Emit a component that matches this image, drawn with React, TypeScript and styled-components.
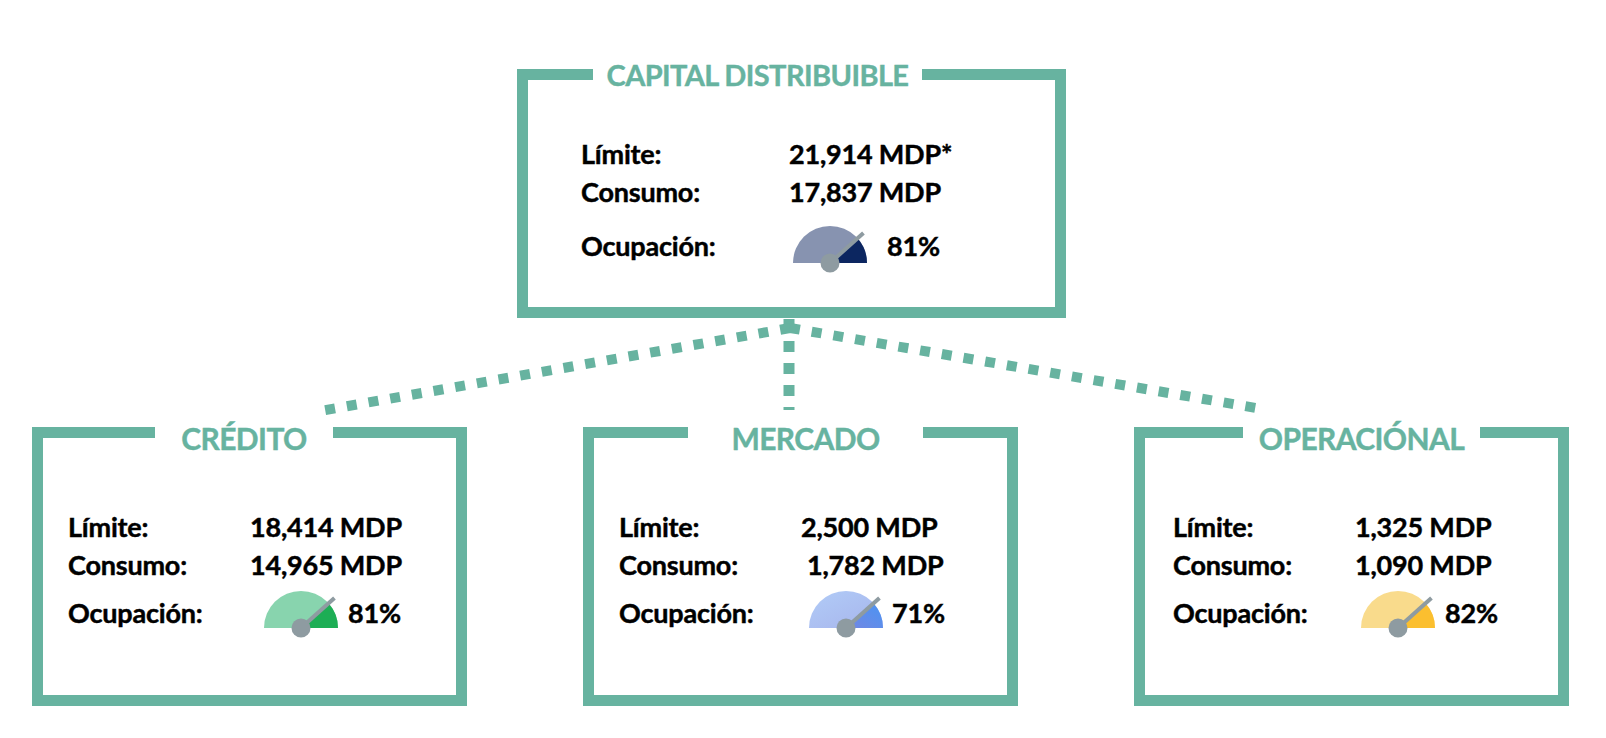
import React from "react";
import styled, { createGlobalStyle } from "styled-components";

const teal = "#67B3A0";

const GlobalStyle = createGlobalStyle`
  html, body {
    margin: 0;
    background: #ffffff;
  }
  body {
    font-family: Lato, "Open Sans", Arial, sans-serif;
    color: #000;
  }
`;

type Tone = {
  light: [string, string];
  dark: [string, string];
};

const tones: Record<string, Tone> = {
  navy: { light: ["#8793B0", "#8793B0"], dark: ["#0C2660", "#0C2660"] },
  green: { light: ["#88D4AE", "#88D4AE"], dark: ["#1DAE55", "#1DAE55"] },
  blue: { light: ["#B1CCF7", "#A7B4EC"], dark: ["#7487E2", "#4A94F3"] },
  gold: { light: ["#F9DB8C", "#F9DB8C"], dark: ["#FBBF2F", "#FBBF2F"] },
};

type BoxData = {
  id: string;
  title: string;
  limite: string;
  consumo: string;
  pct: string;
  tone: Tone;
  legendOffset: number;
  legendWidth: number;
  titleSize: number;
  titleDrop: number;
  padLeft: number;
  padTop: number;
  labelWidth: number;
  contentHeight: number;
  gaugeGap: number;
  gaugeShift: number;
  gaugeDrop: number;
  pctGap: number;
  consumoIndent?: number;
};

const top: BoxData = {
  id: "capital",
  title: "CAPITAL DISTRIBUIBLE",
  limite: "21,914 MDP*",
  consumo: "17,837 MDP",
  pct: "81%",
  tone: tones.navy,
  legendOffset: 65,
  legendWidth: 329,
  titleSize: 29,
  titleDrop: 0,
  padLeft: 53,
  padTop: 44,
  labelWidth: 208,
  contentHeight: 216,
  gaugeGap: 10,
  gaugeShift: 3,
  gaugeDrop: 8,
  pctGap: 19,
};

const children: BoxData[] = [
  {
    id: "credito",
    title: "CRÉDITO",
    limite: "18,414 MDP",
    consumo: "14,965 MDP",
    pct: "81%",
    tone: tones.green,
    legendOffset: 112,
    legendWidth: 178,
    titleSize: 30,
    titleDrop: 12,
    padLeft: 25,
    padTop: 53,
    labelWidth: 182,
    contentHeight: 240,
    gaugeGap: 4,
    gaugeShift: 13,
    gaugeDrop: 4,
    pctGap: 9,
  },
  {
    id: "mercado",
    title: "MERCADO",
    limite: "2,500 MDP",
    consumo: "1,782 MDP",
    pct: "71%",
    tone: tones.blue,
    legendOffset: 94,
    legendWidth: 235,
    titleSize: 30,
    titleDrop: 12,
    padLeft: 25,
    padTop: 53,
    labelWidth: 182,
    contentHeight: 240,
    gaugeGap: 4,
    gaugeShift: 7,
    gaugeDrop: 4,
    pctGap: 8,
    consumoIndent: 6,
  },
  {
    id: "operacional",
    title: "OPERACIÓNAL",
    limite: "1,325 MDP",
    consumo: "1,090 MDP",
    pct: "82%",
    tone: tones.gold,
    legendOffset: 98,
    legendWidth: 237,
    titleSize: 30,
    titleDrop: 12,
    padLeft: 28,
    padTop: 53,
    labelWidth: 182,
    contentHeight: 240,
    gaugeGap: 4,
    gaugeShift: 5,
    gaugeDrop: 4,
    pctGap: 9,
  },
];

const Page = styled.div`
  width: 1606px;
  height: 738px;
  padding-top: 58px;
  box-sizing: border-box;
  overflow: hidden;
`;

const TopRow = styled.div`
  display: flex;
  padding-left: 517px;
`;

const BottomRow = styled.div`
  display: grid;
  grid-template-columns: repeat(3, 435px);
  column-gap: 116px;
  padding-left: 32px;
`;

const Frame = styled.fieldset<{ $width: number }>`
  margin: 0;
  padding: 0;
  min-width: 0;
  width: ${(p) => p.$width}px;
  box-sizing: border-box;
  border: 11px solid ${teal};
`;

// legend keeps text-align: left, otherwise Chrome uses it to place the legend
const Title = styled.legend<{
  $offset: number;
  $width: number;
  $drop: number;
}>`
  margin-left: ${(p) => p.$offset}px;
  width: ${(p) => p.$width}px;
  box-sizing: border-box;
  padding: ${(p) => p.$drop}px 0 0;
  text-align: left;
`;

const TitleText = styled.div<{ $size: number }>`
  text-align: center;
  font-size: ${(p) => p.$size}px;
  line-height: 33px;
  font-weight: 700;
  letter-spacing: -0.6px;
  color: ${teal};
  -webkit-text-stroke: 0.4px ${teal};
  white-space: nowrap;
`;

const Content = styled.div<{ $padLeft: number; $padTop: number; $height: number; $label: number }>`
  height: ${(p) => p.$height}px;
  box-sizing: border-box;
  padding: ${(p) => p.$padTop}px 0 0 ${(p) => p.$padLeft}px;
  display: grid;
  grid-template-columns: ${(p) => p.$label}px auto;
  grid-auto-rows: 38px;
  align-content: start;
  font-size: 27px;
  font-weight: 700;
  line-height: 38px;
  letter-spacing: -0.2px;
  -webkit-text-stroke: 0.45px #000;
`;

const Label = styled.div<{ $gap?: number }>`
  margin-top: ${(p) => p.$gap ?? 0}px;
  height: 50px;
  display: flex;
  align-items: center;
`;

const Value = styled.div<{ $indent?: number }>`
  padding-left: ${(p) => p.$indent ?? 0}px;
  white-space: nowrap;
`;

const Meter = styled.div<{ $gap: number; $shift: number; $pctGap: number }>`
  margin-top: ${(p) => p.$gap}px;
  height: 50px;
  display: flex;
  align-items: center;
  gap: ${(p) => p.$pctGap}px;
  padding-left: ${(p) => p.$shift}px;
`;

const Dial = styled.svg<{ $drop: number }>`
  display: block;
  flex: none;
  margin-top: ${(p) => p.$drop}px;
`;

const Connectors = styled.svg`
  display: block;
  overflow: visible;
`;

function Gauge({ tone, id, drop }: { tone: Tone; id: string; drop: number }) {
  const cx = 38;
  const cy = 37;
  const r = 37;
  const a = (42 * Math.PI) / 180;
  const ex = cx + r * Math.cos(a);
  const ey = cy - r * Math.sin(a);
  const tx = cx + 45 * Math.cos(a);
  const ty = cy - 45 * Math.sin(a);
  return (
    <Dial $drop={drop} width="76" height="48" viewBox="0 0 76 48">
      <defs>
        <linearGradient id={`${id}-l`} x1="0" y1="0" x2="1" y2="1">
          <stop offset="0" stopColor={tone.light[0]} />
          <stop offset="1" stopColor={tone.light[1]} />
        </linearGradient>
        <linearGradient id={`${id}-d`} x1="0" y1="1" x2="1" y2="0">
          <stop offset="0" stopColor={tone.dark[0]} />
          <stop offset="1" stopColor={tone.dark[1]} />
        </linearGradient>
      </defs>
      <path d={`M${cx - r},${cy} A${r},${r} 0 0 1 ${cx + r},${cy} Z`} fill={`url(#${id}-l)`} />
      <path
        d={`M${cx},${cy} L${cx + r},${cy} A${r},${r} 0 0 0 ${ex.toFixed(2)},${ey.toFixed(2)} Z`}
        fill={`url(#${id}-d)`}
      />
      <line x1={cx} y1={cy} x2={tx} y2={ty} stroke="#8E9BA1" strokeWidth="4" />
      <circle cx={cx} cy={cy} r="9.5" fill="#8E9BA1" />
    </Dial>
  );
}

function Box({ data, width }: { data: BoxData; width: number }) {
  return (
    <Frame $width={width}>
      <Title $offset={data.legendOffset} $width={data.legendWidth} $drop={data.titleDrop}>
        <TitleText $size={data.titleSize}>{data.title}</TitleText>
      </Title>
      <Content
        $padLeft={data.padLeft}
        $padTop={data.padTop}
        $height={data.contentHeight}
        $label={data.labelWidth}
      >
        <div>Límite:</div>
        <Value>{data.limite}</Value>
        <div>Consumo:</div>
        <Value $indent={data.consumoIndent}>{data.consumo}</Value>
        <Label $gap={data.gaugeGap}>Ocupación:</Label>
        <Meter $gap={data.gaugeGap} $shift={data.gaugeShift} $pctGap={data.pctGap}>
          <Gauge tone={data.tone} id={data.id} drop={data.gaugeDrop} />
          <span>{data.pct}</span>
        </Meter>
      </Content>
    </Frame>
  );
}

export default function App() {
  return (
    <>
      <GlobalStyle />
      <Page>
        <TopRow>
          <Box data={top} width={549} />
        </TopRow>
        <Connectors width="1606" height="92" viewBox="0 0 1606 92">
          <g stroke={teal} fill="none" strokeWidth="11">
            <line x1="789" y1="1" x2="789" y2="92" strokeDasharray="11 11" />
          </g>
          <g stroke={teal} fill="none" strokeWidth="10" strokeDasharray="10 12">
            <line x1="790" y1="10" x2="320" y2="93" />
            <line x1="790" y1="10" x2="1262" y2="91" />
          </g>
        </Connectors>
        <BottomRow>
          {children.map((c) => (
            <Box key={c.id} data={c} width={435} />
          ))}
        </BottomRow>
      </Page>
    </>
  );
}
